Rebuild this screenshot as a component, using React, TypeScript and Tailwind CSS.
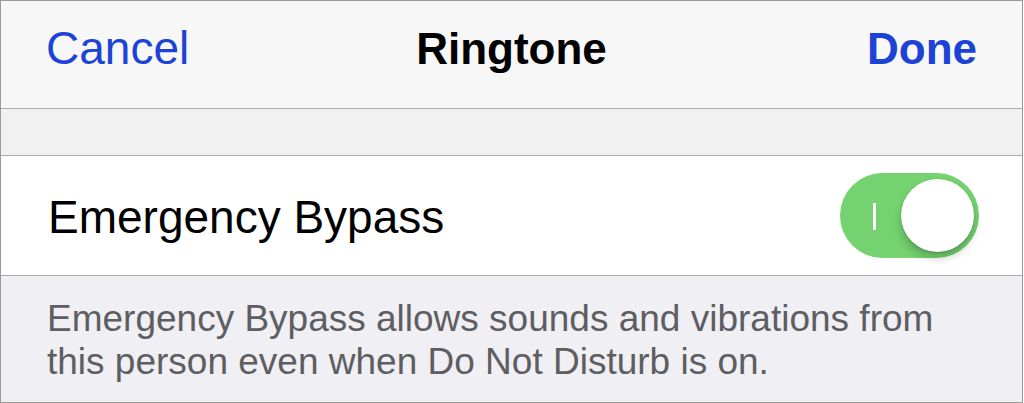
export default function App() {
    return (
        <div className="w-[1024px] h-[403px] bg-white" style={{ fontFamily: '"Liberation Sans", Arial, sans-serif' }}>
            <div className="w-[1023px] h-[403px] border border-[#9a9a9a] flex flex-col overflow-hidden">
                {/* Nav bar */}
                <div className="h-[108px] bg-[#f7f7f7] border-b border-[#ababab] grid grid-cols-[1fr_auto_1fr] items-center px-[45px] pb-[12px]">
                    <span className="text-[46px] text-[#1c43d6] justify-self-start">Cancel</span>
                    <span className="text-[44px] font-bold text-black">Ringtone</span>
                    <span className="text-[44px] font-bold text-[#1c43d6] justify-self-end">Done</span>
                </div>

                {/* Spacer band */}
                <div className="h-[47px] bg-[#f1f1f1] border-b border-[#ababab]"></div>

                {/* Row */}
                <div className="h-[120px] bg-white border-b border-[#ababab] flex items-center justify-between pl-[47px] pr-[43px]">
                    <span className="text-[46px] text-black pt-[4px]">Emergency Bypass</span>
                    <div className="relative w-[139px] h-[85px] rounded-full bg-[#74d370]">
                        <div className="absolute left-[33px] top-[30px] w-[3px] h-[27px] bg-white"></div>
                        <div className="absolute right-[5px] top-[6px] w-[73px] h-[73px] rounded-full bg-white shadow-[0_6px_10px_rgba(0,0,0,0.22),0_1px_2px_rgba(0,0,0,0.15)]"></div>
                    </div>
                </div>

                {/* Footer */}
                <div className="flex-1 bg-[#efeff4] pl-[46px] pt-[21px]">
                    <p className="text-[37px] leading-[43px] text-[#5e5e62] w-[930px]">
                        Emergency Bypass allows sounds and vibrations from this person even when Do Not Disturb is on.
                    </p>
                </div>
            </div>
        </div>
    );
}
